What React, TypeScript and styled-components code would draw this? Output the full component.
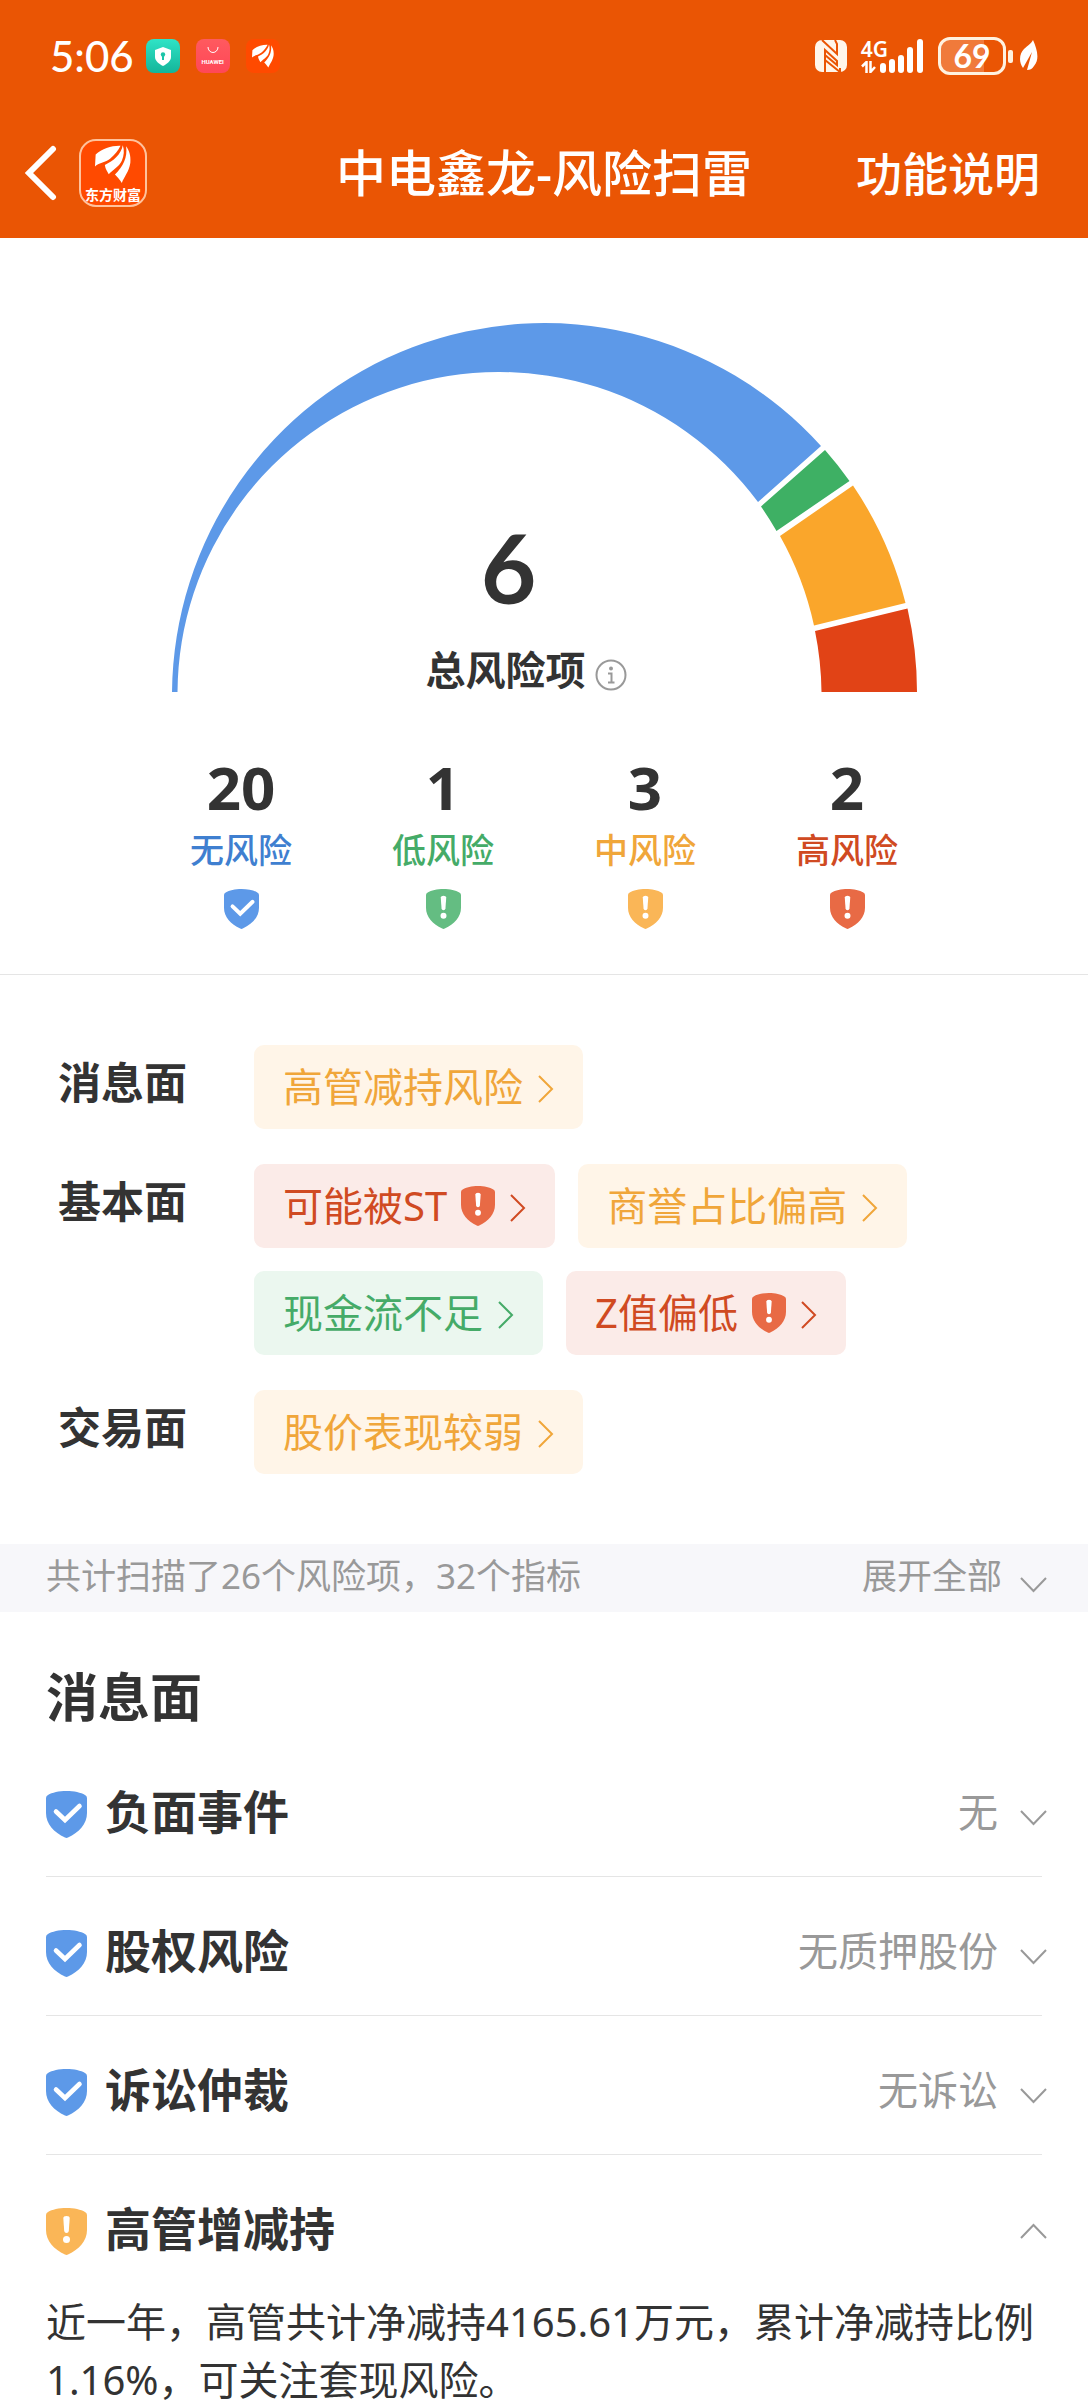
import React, { useState } from "react";
import styled, { createGlobalStyle } from "styled-components";

type Level = "none" | "low" | "medium" | "high";

const palette = {
  brand: "#ea5504",
  ink: "#333333",
  muted: "#999999",
  line: "#e5e5e5",
  bar: "#f7f7fa",
};

const levels: Record<Level, { text: string; arc: string; shield: string; tint: string }> = {
  none: { text: "#3f7fd0", arc: "#5d99e8", shield: "#5d99e8", tint: "#eef5fd" },
  low: { text: "#45ab68", arc: "#3eb064", shield: "#64bd82", tint: "#ebf7ef" },
  medium: { text: "#f0a63a", arc: "#faa62b", shield: "#fab657", tint: "#fff5e8" },
  high: { text: "#d04a22", arc: "#e14316", shield: "#e86a45", tint: "#fbebe8" },
};

const GlobalStyle = createGlobalStyle`
  * { box-sizing: border-box; }
  body { margin: 0; background: #fff; }
  h1, h2, h3, p, ul, dl, dd { margin: 0; padding: 0; }
  button { border: 0; padding: 0; background: none; font: inherit; color: inherit; cursor: pointer; }
  svg { display: block; flex: none; }
`;

const Shell = styled.div`
  height: 100vh;
  display: flex;
  flex-direction: column;
  background: #fff;
  color: ${palette.ink};
  font-family: "Noto Sans", "Noto Sans CJK SC", sans-serif;
`;

const Header = styled.header`
  flex: none;
  padding-bottom: 4px;
  background: ${palette.brand};
  color: #fff;
`;

const StatusBar = styled.div`
  height: 112px;
  padding: 0 49px 0 50px;
  display: flex;
  align-items: center;
  justify-content: space-between;
`;

const StatusGroup = styled.div<{ $gap: number }>`
  display: flex;
  align-items: center;
  gap: ${(p) => p.$gap}px;
`;

const Clock = styled.time`
  margin-right: -4px;
  font-family: Lato, sans-serif;
  font-size: 42px;
  font-weight: 500;
  line-height: 48px;
`;

const AppTile = styled.span<{ $from: string; $to: string }>`
  width: 34px;
  height: 34px;
  display: flex;
  flex-direction: column;
  align-items: center;
  justify-content: center;
  gap: 4px;
  border-radius: 8px;
  background: linear-gradient(${(p) => p.$from}, ${(p) => p.$to});
  font-family: Roboto, sans-serif;
  font-size: 6px;
  font-weight: 700;
  line-height: 8px;
`;

const Signal = styled.div`
  display: flex;
  align-items: flex-end;
`;

const Network = styled.div`
  display: flex;
  flex-direction: column;
  align-items: flex-start;
  gap: 2px;
  margin-right: -8px;
  font-size: 21px;
  font-weight: 600;
  line-height: 20px;
`;

const Battery = styled.div`
  display: flex;
  align-items: center;
  gap: 2px;
`;

const BatteryBody = styled.span<{ $level: number }>`
  width: 68px;
  height: 38px;
  display: flex;
  align-items: center;
  justify-content: center;
  border: 3px solid #fff2e0;
  border-radius: 12px;
  background: linear-gradient(90deg, #f07a3b ${(p) => p.$level}%, transparent ${(p) => p.$level}%);
  font-family: Lato, sans-serif;
  font-size: 32px;
  font-weight: 700;
  line-height: 32px;
`;

const BatteryTip = styled.span`
  width: 5px;
  height: 13px;
  border-radius: 2px;
  background: #fff2e0;
`;

const NavBar = styled.nav`
  height: 122px;
  padding: 0 48px 0 24px;
  display: grid;
  grid-template-columns: 1fr auto 1fr;
  align-items: center;
`;

const NavStart = styled.div`
  display: flex;
  align-items: center;
  gap: 21px;
`;

const NavTitle = styled.h1`
  padding-left: 24px;
  font-size: 50px;
  font-weight: 500;
  line-height: 60px;
`;

const NavLink = styled.a`
  justify-self: end;
  color: inherit;
  font-size: 46px;
  font-weight: 500;
  line-height: 60px;
  text-decoration: none;
`;

const BrandTile = styled.span`
  width: 68px;
  height: 68px;
  padding-top: 4px;
  display: flex;
  flex-direction: column;
  align-items: center;
  gap: 4px;
  border: 2px solid #ffc29c;
  border-radius: 17px;
  background: #ff4a00;
  font-size: 14px;
  font-weight: 700;
  line-height: 16px;
  white-space: nowrap;
`;

const Content = styled.main`
  flex: 1;
  min-height: 0;
  overflow-y: auto;
  scrollbar-width: none;
`;

const Summary = styled.section`
  padding: 84px 24px 45px;
  display: flex;
  flex-direction: column;
  align-items: center;
  border-bottom: 1px solid ${palette.line};
`;

const Gauge = styled.div`
  width: 100%;
  max-width: 746px;
  display: grid;

  > * {
    grid-area: 1 / 1;
  }
`;

const GaugeSvg = styled.svg`
  width: 100%;
  height: auto;
`;

const GaugeCaption = styled.div`
  align-self: end;
  justify-self: center;
  padding-right: 36px;
  display: grid;
  grid-template-columns: auto auto;
  align-items: center;
  column-gap: 9px;
  row-gap: 33px;
`;

const GaugeNumber = styled.strong`
  grid-column: 1;
  justify-self: center;
  padding-left: 6px;
  font-family: Lato, sans-serif;
  font-size: 96px;
  font-weight: 700;
  line-height: 96px;
`;

const GaugeLabel = styled.span`
  grid-column: 1;
  font-size: 40px;
  font-weight: 700;
  line-height: 44px;
`;

const StatList = styled.dl`
  width: 100%;
  max-width: 808px;
  margin-top: 65px;
  display: grid;
  grid-template-columns: repeat(4, 1fr);
`;

const Stat = styled.div`
  display: flex;
  flex-direction: column;
  align-items: center;
`;

const StatLabel = styled.dt<{ $level: Level }>`
  order: 2;
  margin: 11px 0 17px;
  color: ${(p) => levels[p.$level].text};
  font-size: 34px;
  font-weight: 500;
  line-height: 44px;
`;

const StatValue = styled.dd`
  order: 1;
  font-size: 60px;
  font-weight: 700;
  line-height: 60px;
`;

const StatIcon = styled.dd`
  order: 3;
`;

const Groups = styled.section`
  padding: 70px 46px 70px 58px;
  display: flex;
  flex-direction: column;
  gap: 35px;
`;

const Group = styled.div`
  display: grid;
  grid-template-columns: 196px 1fr;
  align-items: start;
`;

const GroupTitle = styled.h2`
  font-size: 43px;
  font-weight: 700;
  line-height: 75px;
`;

const ChipList = styled.div`
  display: flex;
  flex-wrap: wrap;
  gap: 23px;
`;

const Chip = styled.button<{ $level: Level }>`
  height: 84px;
  padding: 0 29px;
  display: flex;
  align-items: center;
  gap: 14px;
  border-radius: 10px;
  background: ${(p) => levels[p.$level].tint};
  color: ${(p) => levels[p.$level].text};
  font-size: 40px;
  line-height: 56px;
  white-space: nowrap;
`;

const ScanBar = styled.div`
  height: 68px;
  padding: 0 41px 4px 46px;
  display: flex;
  align-items: center;
  justify-content: space-between;
  background: ${palette.bar};
  color: ${palette.muted};
  font-size: 35px;
  line-height: 46px;
`;

const ExpandButton = styled.button`
  display: flex;
  align-items: flex-end;
  gap: 18px;
`;

const Details = styled.section`
  padding: 53px 46px 0;
`;

const DetailsTitle = styled.h2`
  margin-bottom: 9px;
  font-size: 52px;
  font-weight: 700;
  line-height: 64px;
`;

const Item = styled.article`
  border-bottom: 1px solid ${palette.line};

  &:last-child {
    border-bottom: 0;
  }
`;

const ItemHead = styled.button`
  width: 100%;
  height: 138px;
  padding-top: 14px;
  display: flex;
  align-items: center;
  gap: 18px;
  text-align: left;
`;

const ItemTitle = styled.span`
  flex: 1;
  padding-bottom: 6px;
  font-size: 46px;
  font-weight: 700;
  line-height: 58px;
`;

const ItemValue = styled.span`
  margin-right: -5px;
  padding-bottom: 4px;
  display: flex;
  align-items: flex-end;
  gap: 22px;
  color: ${palette.muted};
  font-size: 40px;
  line-height: 40px;
`;

const ItemText = styled.p`
  font-size: 40px;
  line-height: 58px;
`;

function Shield({ level, width, height }: { level: Level; width: number; height: number }) {
  return (
    <svg width={width} height={height} viewBox="0 0 41 47" preserveAspectRatio="none" aria-hidden="true">
      <path
        d="M20.500 0C28 0 35 1.500 39 4Q41 5 41 7V22C41 33 33 41.500 22 46.500Q20.500 47.300 19 46.500C8 41.500 0 33 0 22V7Q0 5 2 4C6 1.500 13 0 20.500 0Z"
        fill={levels[level].shield}
      />
      {level === "none" ? (
        <path d="M10 20.500L19 29L33.500 15" fill="none" stroke="#fff" strokeWidth="4.600" strokeLinecap="round" />
      ) : (
        <g fill="#fff">
          <path d="M17.300 10Q17.400 8 20.500 8T23.700 10L22.800 23Q22.500 25 20.500 25T18.200 23Z" />
          <circle cx="20.500" cy="31.500" r="3.500" />
        </g>
      )}
    </svg>
  );
}

function ChevronRight() {
  return (
    <svg width="17" height="34" viewBox="0 0 17 34" fill="none" stroke="currentColor" strokeWidth="2" aria-hidden="true">
      <path d="M2 6L15 19L2 32" />
    </svg>
  );
}

function ChevronToggle({ up = false }: { up?: boolean }) {
  return (
    <svg width="27" height="26" viewBox="0 0 27 26" fill="none" stroke={palette.muted} strokeWidth="2" aria-hidden="true">
      <path d={up ? "M1 22L13.500 9L26 22" : "M1 5L13.500 18L26 5"} />
    </svg>
  );
}

function Feather({ width, height }: { width: number; height: number }) {
  return (
    <svg width={width} height={height} viewBox="52 24 110 116" fill="#fff" aria-hidden="true">
      <path d="M130 26C104 25 74 34 54 53L52 90C66 76 84 78 98 66C112 54 122 42 130 26Z" />
      <path d="M137 25C132 52 108 74 82 85C84 98 90 106 94 113C108 98 124 92 134 72C141 57 142 40 137 25Z" />
      <path d="M147 28C152 62 138 90 113 114C119 120 128 130 134 140C140 122 156 106 160 78C162 56 156 40 147 28Z" />
    </svg>
  );
}

function StatusIcons() {
  return (
    <StatusGroup $gap={14}>
      <svg width="32" height="32" viewBox="0 0 32 32" aria-label="NFC" role="img">
        <rect width="32" height="32" rx="7" fill="#fff6ea" />
        <g fill="none" stroke={palette.brand} strokeWidth="2">
          <path d="M7 0L22 14V4L20 0" />
          <path d="M10 32V10L22 21V25L10 15" />
          <path d="M10 20L25 32V28" />
        </g>
      </svg>
      <Signal>
        <Network>
          4G
          <svg width="15" height="12" viewBox="0 0 15 12" fill="none" stroke="#fff" strokeWidth="2.500" aria-hidden="true">
            <path d="M5.500 12V1L1 5.500" />
            <path d="M9.500 0V11L14 6" />
          </svg>
        </Network>
        <svg width="44" height="34" viewBox="0 0 44 34" fill="#fff" aria-hidden="true">
          <rect x="0" y="24" width="6" height="10" rx="3" />
          <rect x="9" y="20" width="6" height="14" rx="3" />
          <rect x="18" y="16" width="6" height="18" rx="3" />
          <rect x="27" y="8" width="6" height="26" rx="3" />
          <rect x="37" y="0" width="6" height="34" rx="3" />
        </svg>
      </Signal>
      <Battery>
        <BatteryBody $level={69}>69</BatteryBody>
        <BatteryTip />
        <svg width="24" height="32" viewBox="0 0 24 32" aria-hidden="true">
          <path d="M18 0C22 9 25 19 19 26C17 29 15 30 12 30L17 12L8 28C3 21 5 13 9 9C13 5 16 4 18 0Z" fill="#fff" />
        </svg>
      </Battery>
    </StatusGroup>
  );
}

/* Arc segments between the outer circle (r 372) and the offset inner circle (r 322). */
const arcs: { level: Level; d: string }[] = [
  { level: "none", d: "M0 370A372.500 372.500 0 0 1 649 124L586 180A322 322 0 0 0 5.500 370Z" },
  { level: "low", d: "M653 128A372.500 372.500 0 0 1 677.500 159L604.500 209A322 322 0 0 0 589 184.500Z" },
  { level: "medium", d: "M681 163.500A372.500 372.500 0 0 1 733.500 281L642 303.500A322 322 0 0 0 608 214Z" },
  { level: "high", d: "M735.500 286.500A372.500 372.500 0 0 1 745 370H649.500A322 322 0 0 0 643 309Z" },
];

const stats: { level: Level; count: number; label: string }[] = [
  { level: "none", count: 20, label: "无风险" },
  { level: "low", count: 1, label: "低风险" },
  { level: "medium", count: 3, label: "中风险" },
  { level: "high", count: 2, label: "高风险" },
];

const groups: { title: string; chips: { label: string; level: Level }[] }[] = [
  { title: "消息面", chips: [{ label: "高管减持风险", level: "medium" }] },
  {
    title: "基本面",
    chips: [
      { label: "可能被ST", level: "high" },
      { label: "商誉占比偏高", level: "medium" },
      { label: "现金流不足", level: "low" },
      { label: "Z值偏低", level: "high" },
    ],
  },
  { title: "交易面", chips: [{ label: "股价表现较弱", level: "medium" }] },
];

const items: { title: string; level: Level; value?: string; text?: string }[] = [
  { title: "负面事件", level: "none", value: "无" },
  { title: "股权风险", level: "none", value: "无质押股份" },
  { title: "诉讼仲裁", level: "none", value: "无诉讼" },
  {
    title: "高管增减持",
    level: "medium",
    text: "近一年，高管共计净减持4165.61万元，累计净减持比例1.16%，可关注套现风险。",
  },
];

export default function App() {
  const [open, setOpen] = useState<string | null>("高管增减持");

  return (
    <Shell lang="zh-CN">
      <GlobalStyle />
      <Header>
        <StatusBar>
          <StatusGroup $gap={16}>
            <Clock>5:06</Clock>
            <AppTile $from="#2fe3c6" $to="#14b59a">
              <svg width="16" height="19" viewBox="0 0 16 19" aria-hidden="true">
                <path d="M8 0L16 3V10C16 14 12 17 8 19C4 17 0 14 0 10V3Z" fill="#fff" />
                <circle cx="8" cy="7.500" r="2.200" fill="#1cc4a8" />
                <path d="M7 8H9V13H7Z" fill="#1cc4a8" />
              </svg>
            </AppTile>
            <AppTile $from="#ff5a5f" $to="#ff4757">
              <svg width="12" height="7" viewBox="0 0 12 7" fill="none" stroke="#fff" aria-hidden="true">
                <path d="M1 0A5 5.500 0 0 0 11 0" />
              </svg>
              HUAWEI
            </AppTile>
            <AppTile $from="#ff4a00" $to="#ff4a00">
              <Feather width={22} height={24} />
            </AppTile>
          </StatusGroup>
          <StatusIcons />
        </StatusBar>
        <NavBar>
          <NavStart>
            <button type="button" aria-label="返回">
              <svg width="34" height="56" viewBox="0 0 34 56" fill="none" stroke="#fff" strokeWidth="6" strokeLinecap="round" aria-hidden="true">
                <path d="M29 4L5 28L29 52" />
              </svg>
            </button>
            <BrandTile>
              <Feather width={36} height={38} />
              东方财富
            </BrandTile>
          </NavStart>
          <NavTitle>中电鑫龙-风险扫雷</NavTitle>
          <NavLink href="#help">功能说明</NavLink>
        </NavBar>
      </Header>

      <Content>
        <Summary>
          <Gauge>
            <GaugeSvg viewBox="-1 0 746 370" aria-hidden="true">
              {arcs.map((arc) => (
                <path key={arc.level} d={arc.d} fill={levels[arc.level].arc} />
              ))}
            </GaugeSvg>
            <GaugeCaption>
              <GaugeNumber>6</GaugeNumber>
              <GaugeLabel>总风险项</GaugeLabel>
              <button type="button" aria-label="说明">
                <svg width="32" height="42" viewBox="0 0 32 42" fill="none" stroke={palette.muted} strokeWidth="2" aria-hidden="true">
                  <circle cx="16" cy="26" r="14.500" />
                  <circle cx="16" cy="19.500" r="2" fill={palette.muted} stroke="none" />
                  <path d="M13 24.500H16.500V33.500M13 33.500H19.500" />
                </svg>
              </button>
            </GaugeCaption>
          </Gauge>
          <StatList>
            {stats.map((s) => (
              <Stat key={s.level}>
                <StatLabel $level={s.level}>{s.label}</StatLabel>
                <StatValue>{s.count}</StatValue>
                <StatIcon>
                  <Shield level={s.level} width={35} height={40} />
                </StatIcon>
              </Stat>
            ))}
          </StatList>
        </Summary>

        <Groups>
          {groups.map((g) => (
            <Group key={g.title}>
              <GroupTitle>{g.title}</GroupTitle>
              <ChipList>
                {g.chips.map((c) => (
                  <Chip key={c.label} type="button" $level={c.level}>
                    {c.label}
                    {c.level === "high" && <Shield level="high" width={34} height={40} />}
                    <ChevronRight />
                  </Chip>
                ))}
              </ChipList>
            </Group>
          ))}
        </Groups>

        <ScanBar>
          <span>共计扫描了26个风险项，32个指标</span>
          <ExpandButton type="button">
            展开全部
            <ChevronToggle />
          </ExpandButton>
        </ScanBar>

        <Details>
          <DetailsTitle>消息面</DetailsTitle>
          {items.map((item) => {
            const expanded = open === item.title;
            return (
              <Item key={item.title}>
                <ItemHead type="button" aria-expanded={expanded} onClick={() => setOpen(expanded ? null : item.title)}>
                  <Shield level={item.level} width={41} height={47} />
                  <ItemTitle>{item.title}</ItemTitle>
                  <ItemValue>
                    {item.value}
                    <ChevronToggle up={expanded} />
                  </ItemValue>
                </ItemHead>
                {expanded && item.text && <ItemText>{item.text}</ItemText>}
              </Item>
            );
          })}
        </Details>
      </Content>
    </Shell>
  );
}
